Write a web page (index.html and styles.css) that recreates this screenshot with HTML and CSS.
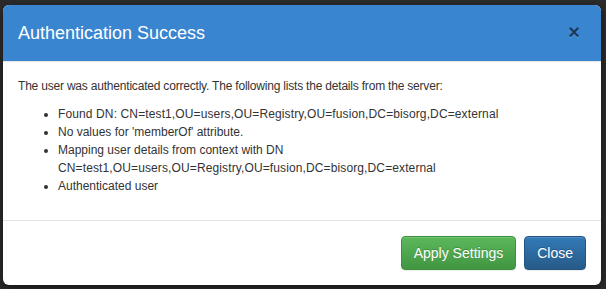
FILE: index.html
```html
<!DOCTYPE html>
<html>
<head>
<meta charset="utf-8">
<link rel="stylesheet" href="styles.css">
</head>
<body>
<div class="modal">
  <div class="modal-header">
    <h4 class="modal-title">Authentication Success</h4>
    <button class="close" type="button">×</button>
  </div>
  <div class="modal-body">
    <p class="intro">The user was authenticated correctly. The following lists the details from the server:</p>
    <ul>
      <li><span class="dn">Found DN: CN=test1,OU=users,OU=Registry,OU=fusion,DC=bisorg,DC=external</span></li>
      <li>No values for 'memberOf' attribute.</li>
      <li>Mapping user details from context with DN<br><span class="dn">CN=test1,OU=users,OU=Registry,OU=fusion,DC=bisorg,DC=external</span></li>
      <li>Authenticated user</li>
    </ul>
  </div>
  <div class="modal-footer">
    <button class="btn btn-success" type="button">Apply Settings</button>
    <button class="btn btn-primary" type="button">Close</button>
  </div>
</div>
</body>
</html>
```
FILE: styles.css
```css
html, body {
  margin: 0;
  height: 100%;
}
body {
  background: #2b2b2b;
  padding: 5px 5px 0 3px;
  box-sizing: border-box;
  font-family: "Liberation Sans", Arial, sans-serif;
  font-size: 12px;
  line-height: 18px;
  color: #333;
}
.modal {
  width: 598px;
  background: #fff;
  border-radius: 6px;
  box-shadow: 0 3px 9px rgba(0,0,0,.5);
  overflow: hidden;
}
.modal-header {
  background: #3a85cf;
  border-bottom: 1px solid #e5e5e5;
  padding: 15px;
  display: flex;
  align-items: center;
  justify-content: space-between;
  height: 26px;
}
.modal-title {
  margin: 0;
  font-size: 18px;
  font-weight: normal;
  color: #fff;
  line-height: 26px;
}
.close {
  background: none;
  border: 0;
  padding: 0;
  margin-right: 6px;
  font-family: "Liberation Sans", Arial, sans-serif;
  font-size: 20px;
  font-weight: bold;
  line-height: 1;
  color: #000;
  opacity: .55;
  text-shadow: 0 1px 0 rgba(255,255,255,.3);
  margin-top: -2px;
}
.modal-body {
  padding: 15px;
}
.modal-body p {
  margin: 0 0 10px;
}
.intro {
  letter-spacing: -0.2px;
}
.dn {
  letter-spacing: 0.12px;
}
.modal-body ul {
  margin: 0 0 10px;
  padding-left: 40px;
}
.modal-footer {
  border-top: 1px solid #e5e5e5;
  padding: 15px;
  display: flex;
  justify-content: flex-end;
  gap: 8px;
}
.btn {
  font-family: "Liberation Sans", Arial, sans-serif;
  font-size: 14px;
  line-height: 20px;
  padding: 6px 12px;
  border-radius: 4px;
  border: 1px solid transparent;
  color: #fff;
  box-shadow: inset 0 1px 0 rgba(255,255,255,.15), 0 1px 1px rgba(0,0,0,.075);
  text-shadow: 0 -1px 0 rgba(0,0,0,.2);
}
.btn-success {
  background: linear-gradient(to bottom, #5cb85c 0, #419641 100%);
  border-color: #3e8f3e;
}
.btn-primary {
  background: linear-gradient(to bottom, #337ab7 0, #265a88 100%);
  border-color: #245580;
}
```
